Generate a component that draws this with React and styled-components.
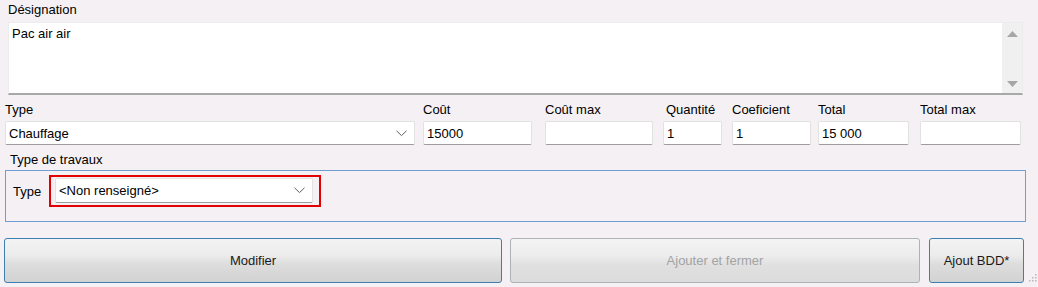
import React from "react";
import styled, { createGlobalStyle } from "styled-components";

const GlobalStyle = createGlobalStyle`
  html, body {
    margin: 0;
    padding: 0;
    background: #f4f0f4;
  }
  body {
    font-family: "Liberation Sans", Arial, sans-serif;
    font-size: 13px;
    color: #000;
  }
`

const Page = styled.div`
  width: 1038px;
  height: 287px;
  display: flex;
  flex-direction: column;
  background: #f4f0f4;
  overflow: hidden;
`

const Label = styled.div`
  line-height: 15px;
  height: 15px;
  white-space: nowrap;
  padding-left: ${(p) => p.$indent || 0}px;
`

const DesignationLabel = styled(Label)`
  margin: 2px 0 0 8px;
`

const TextArea = styled.div`
  margin: 5px 0 0 8px;
  width: 1015px;
  height: 73px;
  box-sizing: border-box;
  display: flex;
  background: #fff;
  border: 1px solid #ececec;
  border-bottom: 2px solid #a8a8a8;
`

const TextContent = styled.div`
  flex: 1;
  padding: 3px 0 0 3px;
  line-height: 15px;
`

const ScrollBar = styled.div`
  width: 20px;
  background: #f0f0f0;
  display: flex;
  flex-direction: column;
  justify-content: space-between;
  align-items: center;
  padding: 8px 0 6px;
  margin-right: 0;
`

const FieldRow = styled.div`
  display: flex;
  margin-top: 7px;
`

const Field = styled.div`
  display: flex;
  flex-direction: column;
  gap: 4px;
  width: ${(p) => p.$w}px;
  margin-left: ${(p) => p.$ml}px;
`

const Input = styled.div`
  height: 24px;
  box-sizing: border-box;
  background: #fff;
  border: 1px solid #e2e2e2;
  border-bottom: 1px solid #9c9c9c;
  border-radius: 2px;
  display: flex;
  align-items: center;
  padding-left: 3px;
  line-height: 15px;
`

const Combo = styled(Input)`
  justify-content: space-between;
  padding-right: 7px;
  height: ${(p) => p.$h || 24}px;
`

const GroupTitle = styled(Label)`
  margin: 7px 0 0 10px;
`

const GroupBox = styled.div`
  margin: 3px 0 0 5px;
  width: 1021px;
  height: 52px;
  box-sizing: border-box;
  border: 1px solid #6f9fd2;
  display: flex;
  align-items: flex-start;
  padding: 4px 0 0 7px;
`

const GroupLabel = styled.div`
  width: 36px;
  line-height: 15px;
  margin-top: 9px;
`

const Highlight = styled.div`
  width: 272px;
  box-sizing: border-box;
  border: 2px solid #e30000;
  padding: 1px 6px 2px 4px;
`

const ButtonRow = styled.div`
  display: flex;
  align-items: flex-end;
  margin: 16px 0 0 4px;
`

const Button = styled.div`
  width: ${(p) => p.$w}px;
  margin-left: ${(p) => p.$ml || 0}px;
  height: 45px;
  box-sizing: border-box;
  border-radius: 3px;
  border: 1px solid ${(p) => (p.$disabled ? "#adb2b5" : "#3c7fb1")};
  background: ${(p) =>
    p.$disabled
      ? "linear-gradient(to bottom, #f4f4f4 0%, #ececec 40%, #e0e0e0 60%, #dcdcdc 100%)"
      : "linear-gradient(to bottom, #f3f3f3 0%, #ececec 38%, #dddddd 58%, #d2d2d2 100%)"};
  color: ${(p) => (p.$disabled ? "#a3a3a3" : "#1a1a1a")};
  display: flex;
  align-items: center;
  justify-content: center;
  white-space: nowrap;
`

const Grip = styled.svg`
  margin-left: 5px;
  margin-bottom: 1px;
`

const Chevron = () => (
  <svg width="11" height="7" viewBox="0 0 11 7">
    <path d="M0.5 0.8 L5.5 5.6 L10.5 0.8" fill="none" stroke="#5f5f5f" strokeWidth="1" />
  </svg>
)

const Arrow = ({ up }) => (
  <svg width="11" height="6" viewBox="0 0 11 6">
    <path d={up ? "M0 6 L5.5 0 L11 6 Z" : "M0 0 L11 0 L5.5 6 Z"} fill="#a6a6a6" />
  </svg>
)

const fields = [
  { label: "Coût", value: "15000", w: 109, ml: 8 },
  { label: "Coût max", value: "", w: 108, ml: 13 },
  { label: "Quantité", value: "1", w: 59, ml: 10, indent: 3 },
  { label: "Coeficient", value: "1", w: 79, ml: 10 },
  { label: "Total", value: "15 000", w: 91, ml: 7 },
  { label: "Total max", value: "", w: 101, ml: 11 },
]

export default function App() {
  return (
    <Page>
      <GlobalStyle />
      <DesignationLabel>Désignation</DesignationLabel>
      <TextArea>
        <TextContent>Pac air air</TextContent>
        <ScrollBar>
          <Arrow up />
          <Arrow />
        </ScrollBar>
      </TextArea>

      <FieldRow>
        <Field $w={410} $ml={5}>
          <Label>Type</Label>
          <Combo>
            <span>Chauffage</span>
            <Chevron />
          </Combo>
        </Field>
        {fields.map((f) => (
          <Field key={f.label} $w={f.w} $ml={f.ml}>
            <Label $indent={f.indent}>{f.label}</Label>
            <Input>{f.value}</Input>
          </Field>
        ))}
      </FieldRow>

      <GroupTitle>Type de travaux</GroupTitle>
      <GroupBox>
        <GroupLabel>Type</GroupLabel>
        <Highlight>
          <Combo $h={25}>
            <span>&lt;Non renseigné&gt;</span>
            <Chevron />
          </Combo>
        </Highlight>
      </GroupBox>

      <ButtonRow>
        <Button $w={498}>Modifier</Button>
        <Button $w={410} $ml={8} $disabled>
          Ajouter et fermer
        </Button>
        <Button $w={95} $ml={9}>Ajout BDD*</Button>
        <Grip width="8" height="9" viewBox="0 0 8 9">
          {[
            [6, 1],
            [6, 4],
            [3, 4],
            [6, 7],
            [3, 7],
            [0, 7],
          ].map(([x, y]) => (
            <rect key={`${x}-${y}`} x={x} y={y} width="1.5" height="1.5" fill="#b8b8b8" />
          ))}
        </Grip>
      </ButtonRow>
    </Page>
  )
}
